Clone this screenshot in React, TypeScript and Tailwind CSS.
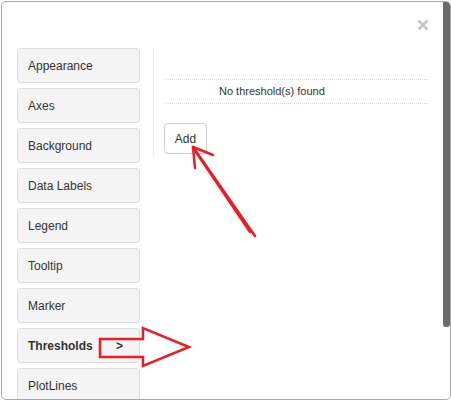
import React from "react";

const tabs = [
  "Appearance",
  "Axes",
  "Background",
  "Data Labels",
  "Legend",
  "Tooltip",
  "Marker",
  "Thresholds",
  "PlotLines",
];

const Annotations = () => (
  <svg
    className="pointer-events-none absolute left-0 top-0"
    width={451}
    height={401}
    viewBox="0 0 451 401"
  >
    {/* arrow to the Add button */}
    <g stroke="#ed1c24" strokeWidth={2.5} strokeLinecap="round" fill="none">
      <line x1={255} y1={236} x2={193} y2={147} />
      <line x1={250} y1={232} x2={196} y2={152} />
      <line x1={193} y1={147} x2={195} y2={168} />
      <line x1={193} y1={147} x2={213} y2={155} />
    </g>
    {/* block arrow next to Thresholds */}
    <polygon
      points="100,339 143,339 143,328 189,347 143,366 143,357 100,357"
      fill="none"
      stroke="#ed1c24"
      strokeWidth={2.5}
      strokeLinejoin="miter"
    />
  </svg>
);

const CloseIcon = () => (
  <svg width={12} height={12} viewBox="0 0 12 12">
    <g stroke="#c8c8c8" strokeWidth={2.6} strokeLinecap="butt">
      <line x1={1.5} y1={1.5} x2={10.5} y2={10.5} />
      <line x1={10.5} y1={1.5} x2={1.5} y2={10.5} />
    </g>
  </svg>
);

export default function App() {
  return (
    <div
      className="relative h-[401px] w-[451px] overflow-hidden bg-white pl-[1px] pt-[1px]"
      style={{ fontFamily: '"Liberation Sans", Arial, sans-serif' }}
    >
      <div className="flex h-[399px] w-[450px] overflow-hidden rounded-[5px] border border-[#a8a8a8] bg-white">
        <div className="flex min-w-0 flex-1 flex-col">
          {/* header */}
          <div className="flex h-[46px] shrink-0 items-start justify-end pr-[14px] pt-[17px]">
            <CloseIcon />
          </div>

          {/* body */}
          <div className="flex items-start pl-[15px]">
            <div className="flex w-[123px] shrink-0 flex-col gap-[5px]">
              {tabs.map((t) => (
                <div
                  key={t}
                  className={`flex h-[35px] shrink-0 items-center justify-between rounded-[4px] border border-[#dcdcdc] bg-[#f4f4f4] pl-[10px] pr-[16px] text-[12px] text-[#333] ${
                    t === "Thresholds" ? "font-bold text-[#222]" : ""
                  }`}
                >
                  <span>{t}</span>
                  {t === "Thresholds" && <span>&gt;</span>}
                </div>
              ))}
            </div>

            <div className="ml-[13px] w-[276px] border-l border-[#ececec] pb-[3px] pl-[10px] pt-[31px]">
              <div className="flex h-[25px] w-[265px] items-center border-y border-dotted border-[#d6d6d6] pl-[55px] text-[11px] text-[#333]">
                No threshold(s) found
              </div>
              <button className="mt-[19px] h-[31px] w-[43px] rounded-[4px] border border-[#cfcfcf] bg-white text-[12px] text-[#333]">
                Add
              </button>
            </div>
          </div>
        </div>

        {/* scrollbar */}
        <div className="w-[7px] shrink-0">
          <div className="h-[325px] rounded-b-[3px] bg-[#6b6b6b]" />
        </div>
      </div>

      <Annotations />
    </div>
  );
}
